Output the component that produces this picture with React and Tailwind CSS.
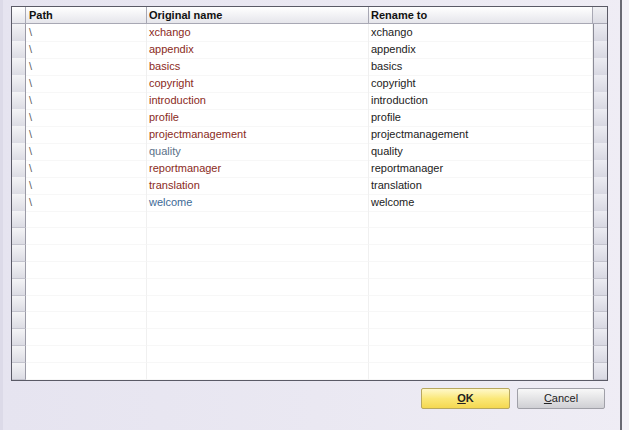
import React from 'react';

const rows = [
  { name: 'xchango', color: 'text-[#8a2a22]' },
  { name: 'appendix', color: 'text-[#8a2a22]' },
  { name: 'basics', color: 'text-[#8a2a22]' },
  { name: 'copyright', color: 'text-[#8a2a22]' },
  { name: 'introduction', color: 'text-[#8a2a22]' },
  { name: 'profile', color: 'text-[#8a2a22]' },
  { name: 'projectmanagement', color: 'text-[#8a2a22]' },
  { name: 'quality', color: 'text-[#5a7088]' },
  { name: 'reportmanager', color: 'text-[#8a2a22]' },
  { name: 'translation', color: 'text-[#8a2a22]' },
  { name: 'welcome', color: 'text-[#3d6a96]' },
];

const emptyRows = Array.from({ length: 10 });

const cols = 'grid grid-cols-[14px_121px_222px_224px_14px]';

const RowHeader = () => (
  <div className="h-full border-b border-r border-b-[#c4c4ce] border-r-[#9a9aa6] bg-gradient-to-b from-[#f4f4f6] to-[#dcdce4]" />
);

const Row = ({ path, name, color, rename }) => (
  <div className={`${cols} h-[17px]`}>
    <RowHeader />
    <div className="border-b border-r border-b-[#f7f7f7] border-r-[#f0f0f0] pl-[3px] leading-[17px] text-[#606060]">{path}</div>
    <div className={`border-b border-r border-b-[#f7f7f7] border-r-[#f0f0f0] pl-[2px] leading-[17px] ${color}`}>{name}</div>
    <div className="border-b border-r border-b-[#f7f7f7] border-r-[#f0f0f0] pl-[2px] leading-[17px] text-[#222]">{rename}</div>
    <div className="h-full border-b border-l border-b-[#c4c4ce] border-l-[#8a8a96] bg-gradient-to-b from-[#ececf2] to-[#d8d8e2]" />
  </div>
);

export default function App() {
  return (
    <div
      className="flex h-[430px] w-[629px] overflow-hidden bg-gradient-to-r from-[#e6e4f0] via-[#eae8f2] to-[#efedf5] text-[11px]"
      style={{ fontFamily: '"Liberation Sans", Arial, sans-serif' }}
    >
      <div className="flex w-[620px] flex-col border-l-[3px] border-l-[#dcdae8]">
        <div className="ml-[8px] mt-[6px] flex h-[375px] w-[597px] flex-col overflow-hidden border border-[#5a5a66] bg-white">
          <div className={`${cols} h-[17px] shrink-0 bg-gradient-to-b from-white to-[#e4e4ea]`}>
            <div className="border-b border-r border-[#a8a8b4]" />
            <div className="border-b border-r border-[#a8a8b4] pl-[3px] font-bold leading-[16px] text-[#111]">Path</div>
            <div className="border-b border-r border-[#a8a8b4] pl-[2px] font-bold leading-[16px] text-[#111]">Original name</div>
            <div className="border-b border-r border-[#a8a8b4] pl-[2px] font-bold leading-[16px] text-[#111]">Rename to</div>
            <div className="border-b border-[#a8a8b4] bg-gradient-to-b from-[#f0f0f4] to-[#dcdce4]" />
          </div>
          {rows.map((r) => (
            <Row key={r.name} path="\" name={r.name} color={r.color} rename={r.name} />
          ))}
          {emptyRows.map((_, i) => (
            <Row key={i} path="" name="" color="" rename="" />
          ))}
        </div>
        <div className="mt-[7px] flex justify-end gap-[7px] pr-[15px]">
          <button className="h-[21px] w-[89px] rounded-[2px] border border-[#b8a860] bg-gradient-to-b from-[#fff8c8] via-[#fbe878] to-[#f4d850] text-[11px] font-bold text-[#222]">
            <span className="underline">O</span>K
          </button>
          <button className="h-[21px] w-[88px] rounded-[2px] border border-[#a0a0a8] bg-gradient-to-b from-[#f8f8f8] via-[#e4e4e6] to-[#cfcfd4] text-[11px] text-[#222]">
            <span className="underline">C</span>ancel
          </button>
        </div>
      </div>
      <div className="h-full w-[2px] bg-[#6a6a74]" />
      <div className="h-full flex-1 bg-[#f4f2f8]" />
    </div>
  );
}
